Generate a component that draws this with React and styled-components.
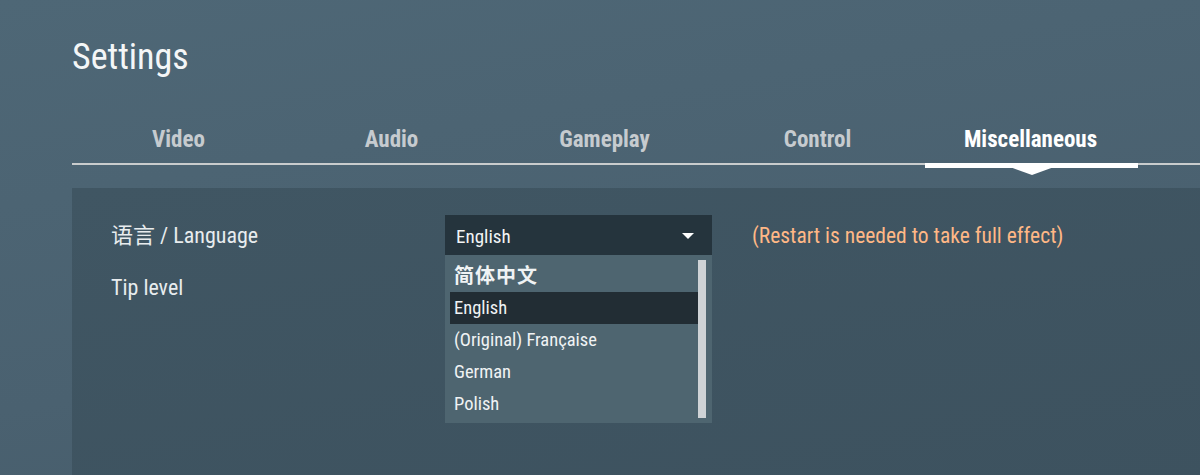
import styled, { createGlobalStyle } from "styled-components";

const font = `Roboto, "Noto Sans CJK SC", sans-serif`;

const Global = createGlobalStyle`
    html, body {
        margin: 0;
        padding: 0;
        background: #4b6371;
    }
    body {
        font-family: ${font};
        font-stretch: 75%;
        overflow: hidden;
    }
`;

const Page = styled.div`
    width: 1200px;
    height: 475px;
    overflow: hidden;
    background: linear-gradient(170deg, #4e6776 0%, #4a6170 60%, #455b69 100%);
    padding-left: 72px;
    box-sizing: border-box;
    color: #fff;
`;

const Title = styled.h1`
    margin: 0;
    padding-top: 35px;
    height: 98px;
    box-sizing: border-box;
    font-weight: normal;
    font-size: 36px;
    line-height: 44px;
    color: #f4f6f7;
`;

const Tabs = styled.div`
    display: flex;
    height: 67px;
    border-bottom: 2px solid #c9cccd;
    box-sizing: border-box;
    width: 1200px;
`;

const Tab = styled.div`
    position: relative;
    width: 213px;
    flex: none;
    text-align: center;
    font-size: 23px;
    font-weight: bold;
    line-height: 84px;
    height: 65px;
    color: ${p => (p.$active ? "#ffffff" : "#c6cbcf")};
    &::after {
        content: "";
        display: ${p => (p.$active ? "block" : "none")};
        position: absolute;
        left: 1px;
        right: -1px;
        bottom: -5px;
        height: 5px;
        background: #fff;
    }
    &::before {
        content: "";
        display: ${p => (p.$active ? "block" : "none")};
        position: absolute;
        left: 50%;
        margin-left: -21px;
        bottom: -12px;
        border-left: 22px solid transparent;
        border-right: 22px solid transparent;
        border-top: 8px solid #fff;
    }
`;

const Panel = styled.div`
    margin-top: 23px;
    height: 300px;
    background: linear-gradient(170deg, #405663 0%, #3d525f 100%);
    padding: 27px 0 0 39px;
    box-sizing: border-box;
    display: flex;
    flex-direction: column;
    gap: 12px;
`;

const Row = styled.div`
    display: flex;
    align-items: flex-start;
    height: 40px;
`;

const Label = styled.div`
    width: 334px;
    flex: none;
    font-size: 22px;
    line-height: 42px;
    color: #e8ecee;
`;

const SelectWrap = styled.div`
    position: relative;
    width: 267px;
    flex: none;
`;

const SelectBox = styled.div`
    height: 40px;
    background: #25343d;
    display: flex;
    align-items: center;
    justify-content: space-between;
    padding: 2px 18px 0 11px;
    box-sizing: border-box;
    font-size: 19px;
    color: #f2f4f5;
`;

const Caret = styled.span`
    width: 0;
    height: 0;
    border-left: 6px solid transparent;
    border-right: 6px solid transparent;
    border-top: 6px solid #fff;
`;

const List = styled.div`
    position: absolute;
    top: 40px;
    left: 0;
    width: 267px;
    height: 168px;
    background: #4e6570;
    box-sizing: border-box;
    padding: 5px 14px 5px 5px;
    display: flex;
    flex-direction: column;
    z-index: 2;
`;

const Option = styled.div`
    height: 32px;
    line-height: 32px;
    padding-left: 4px;
    font-size: ${p => (p.$cjk ? "20px" : "18.5px")};
    font-weight: ${p => (p.$cjk ? "bold" : "normal")};
    letter-spacing: ${p => (p.$cjk ? "1px" : "normal")};
    color: #f0f3f4;
    background: ${p => (p.$selected ? "#222d34" : "transparent")};
`;

const Scrollbar = styled.div`
    position: absolute;
    right: 6px;
    top: 5px;
    bottom: 5px;
    width: 8px;
    background: #cfd3d6;
`;

const Note = styled.div`
    margin-left: 40px;
    font-size: 21.5px;
    line-height: 42px;
    color: #ffb886;
`;

const tabs = ["Video", "Audio", "Gameplay", "Control", "Miscellaneous"];
const languages = ["简体中文", "English", "(Original) Française", "German", "Polish"];

export default function App() {
    return (
        <Page>
            <Global />
            <Title>Settings</Title>
            <Tabs>
                {tabs.map(t => (
                    <Tab key={t} $active={t === "Miscellaneous"}>{t}</Tab>
                ))}
            </Tabs>
            <Panel>
                <Row>
                    <Label>语言 / Language</Label>
                    <SelectWrap>
                        <SelectBox>
                            English
                            <Caret />
                        </SelectBox>
                        <List>
                            {languages.map((l, i) => (
                                <Option key={l} $cjk={i === 0} $selected={l === "English"}>{l}</Option>
                            ))}
                            <Scrollbar />
                        </List>
                    </SelectWrap>
                    <Note>(Restart is needed to take full effect)</Note>
                </Row>
                <Row>
                    <Label>Tip level</Label>
                </Row>
            </Panel>
        </Page>
    );
}
